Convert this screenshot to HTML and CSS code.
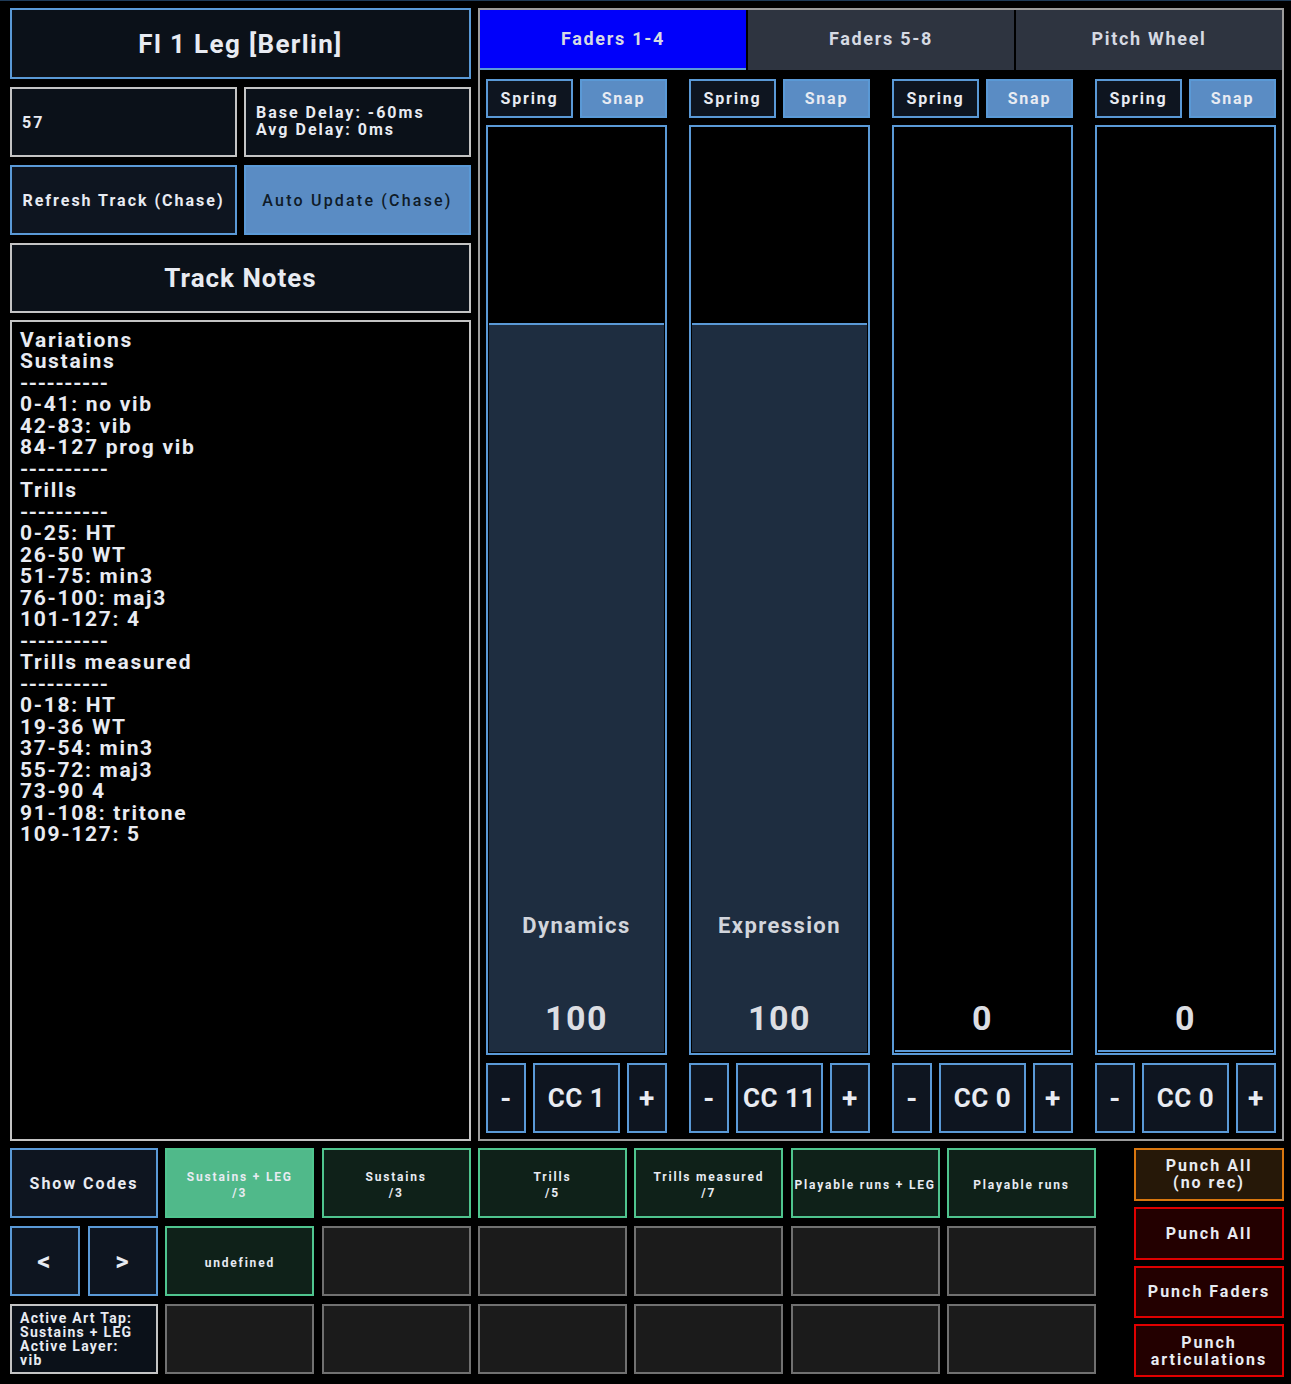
FILE: index.html
```html
<!DOCTYPE html>
<html>
<head>
<meta charset="utf-8">
<link rel="stylesheet" href="styles.css">
</head>
<body>
<div class="app">
  <div class="top">
    <div class="left">
      <div class="box title blue">Fl 1 Leg [Berlin]</div>
      <div class="pair">
        <div class="box info start">57</div>
        <div class="box info start delay">Base Delay: -60ms<br>Avg Delay: 0ms</div>
      </div>
      <div class="pair">
        <div class="box btn">Refresh Track (Chase)</div>
        <div class="box btn on">Auto Update (Chase)</div>
      </div>
      <div class="box title notes-title">Track Notes</div>
      <div class="box notes">Variations
Sustains
<span class="dash">----------</span>
0-41: no vib
42-83: vib
84-127 prog vib
<span class="dash">----------</span>
Trills
<span class="dash">----------</span>
0-25: HT
26-50 WT
51-75: min3
76-100: maj3
101-127: 4
<span class="dash">----------</span>
Trills measured
<span class="dash">----------</span>
0-18: HT
19-36 WT
37-54: min3
55-72: maj3
73-90 4
91-108: tritone
109-127: 5</div>
    </div>
    <div class="panel">
      <div class="tabs">
        <div class="tab active">Faders 1-4</div>
        <div class="tab">Faders 5-8</div>
        <div class="tab">Pitch Wheel</div>
      </div>
      <div class="faders">
        <div class="fcol">
          <div class="modes"><div class="mode">Spring</div><div class="mode on">Snap</div></div>
          <div class="fader">
            <div class="fill" style="height:78.74%"></div>
            <div class="flabel">Dynamics</div>
            <div class="fvalue">100</div>
          </div>
          <div class="cc"><div class="ccb pm">-</div><div class="ccb">CC 1</div><div class="ccb pm">+</div></div>
        </div>
        <div class="fcol">
          <div class="modes"><div class="mode">Spring</div><div class="mode on">Snap</div></div>
          <div class="fader">
            <div class="fill" style="height:78.74%"></div>
            <div class="flabel">Expression</div>
            <div class="fvalue">100</div>
          </div>
          <div class="cc"><div class="ccb pm">-</div><div class="ccb">CC 11</div><div class="ccb pm">+</div></div>
        </div>
        <div class="fcol">
          <div class="modes"><div class="mode">Spring</div><div class="mode on">Snap</div></div>
          <div class="fader">
            <div class="fill" style="height:0%"></div>
            <div class="fvalue">0</div>
          </div>
          <div class="cc"><div class="ccb pm">-</div><div class="ccb">CC 0</div><div class="ccb pm">+</div></div>
        </div>
        <div class="fcol">
          <div class="modes"><div class="mode">Spring</div><div class="mode on">Snap</div></div>
          <div class="fader">
            <div class="fill" style="height:0%"></div>
            <div class="fvalue">0</div>
          </div>
          <div class="cc"><div class="ccb pm">-</div><div class="ccb">CC 0</div><div class="ccb pm">+</div></div>
        </div>
      </div>
    </div>
  </div>
  <div class="bottom">
    <div class="grid">
      <div class="box btn">Show Codes</div>
      <div class="box art active">Sustains + LEG<br>/3</div>
      <div class="box art">Sustains<br>/3</div>
      <div class="box art">Trills<br>/5</div>
      <div class="box art">Trills measured<br>/7</div>
      <div class="box art">Playable runs + LEG</div>
      <div class="box art">Playable runs</div>

      <div class="nav"><div class="box btn arrow">&lt;</div><div class="box btn arrow">&gt;</div></div>
      <div class="box art">undefined</div>
      <div class="box empty"></div>
      <div class="box empty"></div>
      <div class="box empty"></div>
      <div class="box empty"></div>
      <div class="box empty"></div>

      <div class="box status">Active Art Tap:<br>Sustains + LEG<br>Active Layer:<br>vib</div>
      <div class="box empty"></div>
      <div class="box empty"></div>
      <div class="box empty"></div>
      <div class="box empty"></div>
      <div class="box empty"></div>
      <div class="box empty"></div>
    </div>
    <div class="punch">
      <div class="box pbtn orange">Punch All<br>(no rec)</div>
      <div class="box pbtn red">Punch All</div>
      <div class="box pbtn red">Punch Faders</div>
      <div class="box pbtn red">Punch<br>articulations</div>
    </div>
  </div>
</div>
</body>
</html>
```

FILE: styles.css
```css
html, body {
  margin: 0;
  background: #000;
}
body {
  border-top: 1px solid #1f3b58;
  font-family: Roboto, "Liberation Sans", sans-serif;
  font-weight: 700;
  color: #e8ebf2;
}
.app {
  padding: 7px 7px 0 10px;
}
.box {
  box-sizing: border-box;
  border: 2px solid #c4c4c4;
  display: flex;
  align-items: center;
  justify-content: center;
  text-align: center;
}
.top {
  display: flex;
  gap: 7px;
  height: 1133px;
}
.left {
  width: 461px;
  display: flex;
  flex-direction: column;
  gap: 8px;
}
.title {
  height: 71px;
  font-size: 26px;
  letter-spacing: 1.35px;
  background: #0b1119;
}
.title.blue {
  border-color: #5a99d6;
}
.title.notes-title {
  height: 70px;
  margin-bottom: -1px;
  letter-spacing: 1px;
}
.pair {
  display: grid;
  grid-template-columns: 1fr 1fr;
  gap: 7px;
  height: 70px;
}
.info {
  background: #0b1119;
  font-size: 16px;
  letter-spacing: 2px;
}
.info.start {
  justify-content: flex-start;
  text-align: left;
  padding-left: 10px;
}
.info.delay {
  line-height: 17px;
  padding-bottom: 2px;
}
.btn {
  background: #0e1520;
  border-color: #5a99d6;
  font-size: 16px;
  letter-spacing: 2px;
}
.btn.on {
  background: #5a8cc4;
  color: #0f1b28;
  font-weight: 500;
  letter-spacing: 2.2px;
}
.notes {
  flex: 1;
  background: #000;
  display: block;
  text-align: left;
  white-space: pre-line;
  font-size: 21px;
  line-height: 21.5px;
  letter-spacing: 1.7px;
  padding: 7.5px 8px 0 8px;
}
.dash {
  letter-spacing: 0.6px;
}

/* right panel */
.panel {
  width: 806px;
  box-sizing: border-box;
  border: 2px solid #9c9c9c;
  display: flex;
  flex-direction: column;
}
.tabs {
  display: grid;
  grid-template-columns: 1fr 1fr 1fr;
  gap: 2px;
  height: 60px;
}
.tab {
  background: #2e3440;
  color: #d6dae3;
  display: flex;
  align-items: center;
  justify-content: center;
  font-size: 18px;
  letter-spacing: 1.7px;
  padding-bottom: 4px;
}
.tab.active {
  background: #0000fa;
  box-shadow: inset 0 -2px 0 #5a99d6;
}
.faders {
  flex: 1;
  display: grid;
  grid-template-columns: repeat(4, 1fr);
  column-gap: 22px;
  padding: 9px 6px 6px 6px;
}
.fcol {
  display: flex;
  flex-direction: column;
  gap: 7px;
}
.modes {
  display: grid;
  grid-template-columns: 1fr 1fr;
  gap: 7px;
  height: 39px;
}
.mode {
  box-sizing: border-box;
  border: 2px solid #5a99d6;
  background: #0e1520;
  display: flex;
  align-items: center;
  justify-content: center;
  font-size: 16px;
  letter-spacing: 1.8px;
}
.mode.on {
  background: #5a8cc4;
}
.fader {
  position: relative;
  height: 930px;
  box-sizing: border-box;
  border: 2px solid #5a99d6;
  background: #000;
  display: flex;
  flex-direction: column;
  justify-content: flex-end;
  align-items: center;
  padding-bottom: 15px;
}
.fill {
  position: absolute;
  left: 1px;
  right: 1px;
  bottom: 1px;
  box-sizing: border-box;
  min-height: 2px;
  background: #1e2d40;
  border-top: 2px solid #5a99d6;
}
.flabel {
  position: relative;
  font-size: 22px;
  letter-spacing: 1.4px;
  color: #d2d5dc;
  margin-bottom: 60px;
}
.fvalue {
  position: relative;
  font-size: 34px;
  letter-spacing: 1.5px;
  color: #dcdee3;
}
.cc {
  margin-top: 1px;
  height: 70px;
  display: grid;
  grid-template-columns: 40px 1fr 40px;
  gap: 7px;
}
.ccb {
  box-sizing: border-box;
  border: 2px solid #5a99d6;
  background: #0e1520;
  display: flex;
  align-items: center;
  justify-content: center;
  font-size: 26px;
  letter-spacing: 0.5px;
}
.ccb.pm {
  font-size: 28px;
}

/* bottom */
.bottom {
  display: flex;
  justify-content: space-between;
  margin-top: 7px;
}
.grid {
  width: 1086px;
  display: grid;
  grid-template-columns: 148px repeat(6, 1fr);
  grid-template-rows: repeat(3, 70px);
  gap: 8px 7.33px;
}
.art {
  background: #0f2119;
  border-color: #4fc48e;
  font-size: 12px;
  line-height: 16px;
  letter-spacing: 1.8px;
  padding-top: 3px;
}
.art.active {
  background: #50b98a;
}
.empty {
  background: #1b1b1b;
  border-color: #707070;
}
.nav {
  display: grid;
  grid-template-columns: 1fr 1fr;
  gap: 8px;
}
.arrow {
  font-size: 26px;
}
.status {
  background: #0b1119;
  justify-content: flex-start;
  align-items: flex-start;
  text-align: left;
  font-size: 14px;
  line-height: 14px;
  letter-spacing: 1.3px;
  padding: 5px 8px;
}
.punch {
  width: 150px;
  display: flex;
  flex-direction: column;
  gap: 6px;
  height: 229px;
}
.pbtn {
  flex: 1;
  font-size: 16px;
  line-height: 17px;
  letter-spacing: 2px;
}
.pbtn.orange {
  background: #261808;
  border-color: #d9770f;
}
.pbtn.red {
  background: #230000;
  border-color: #e00000;
}
```
